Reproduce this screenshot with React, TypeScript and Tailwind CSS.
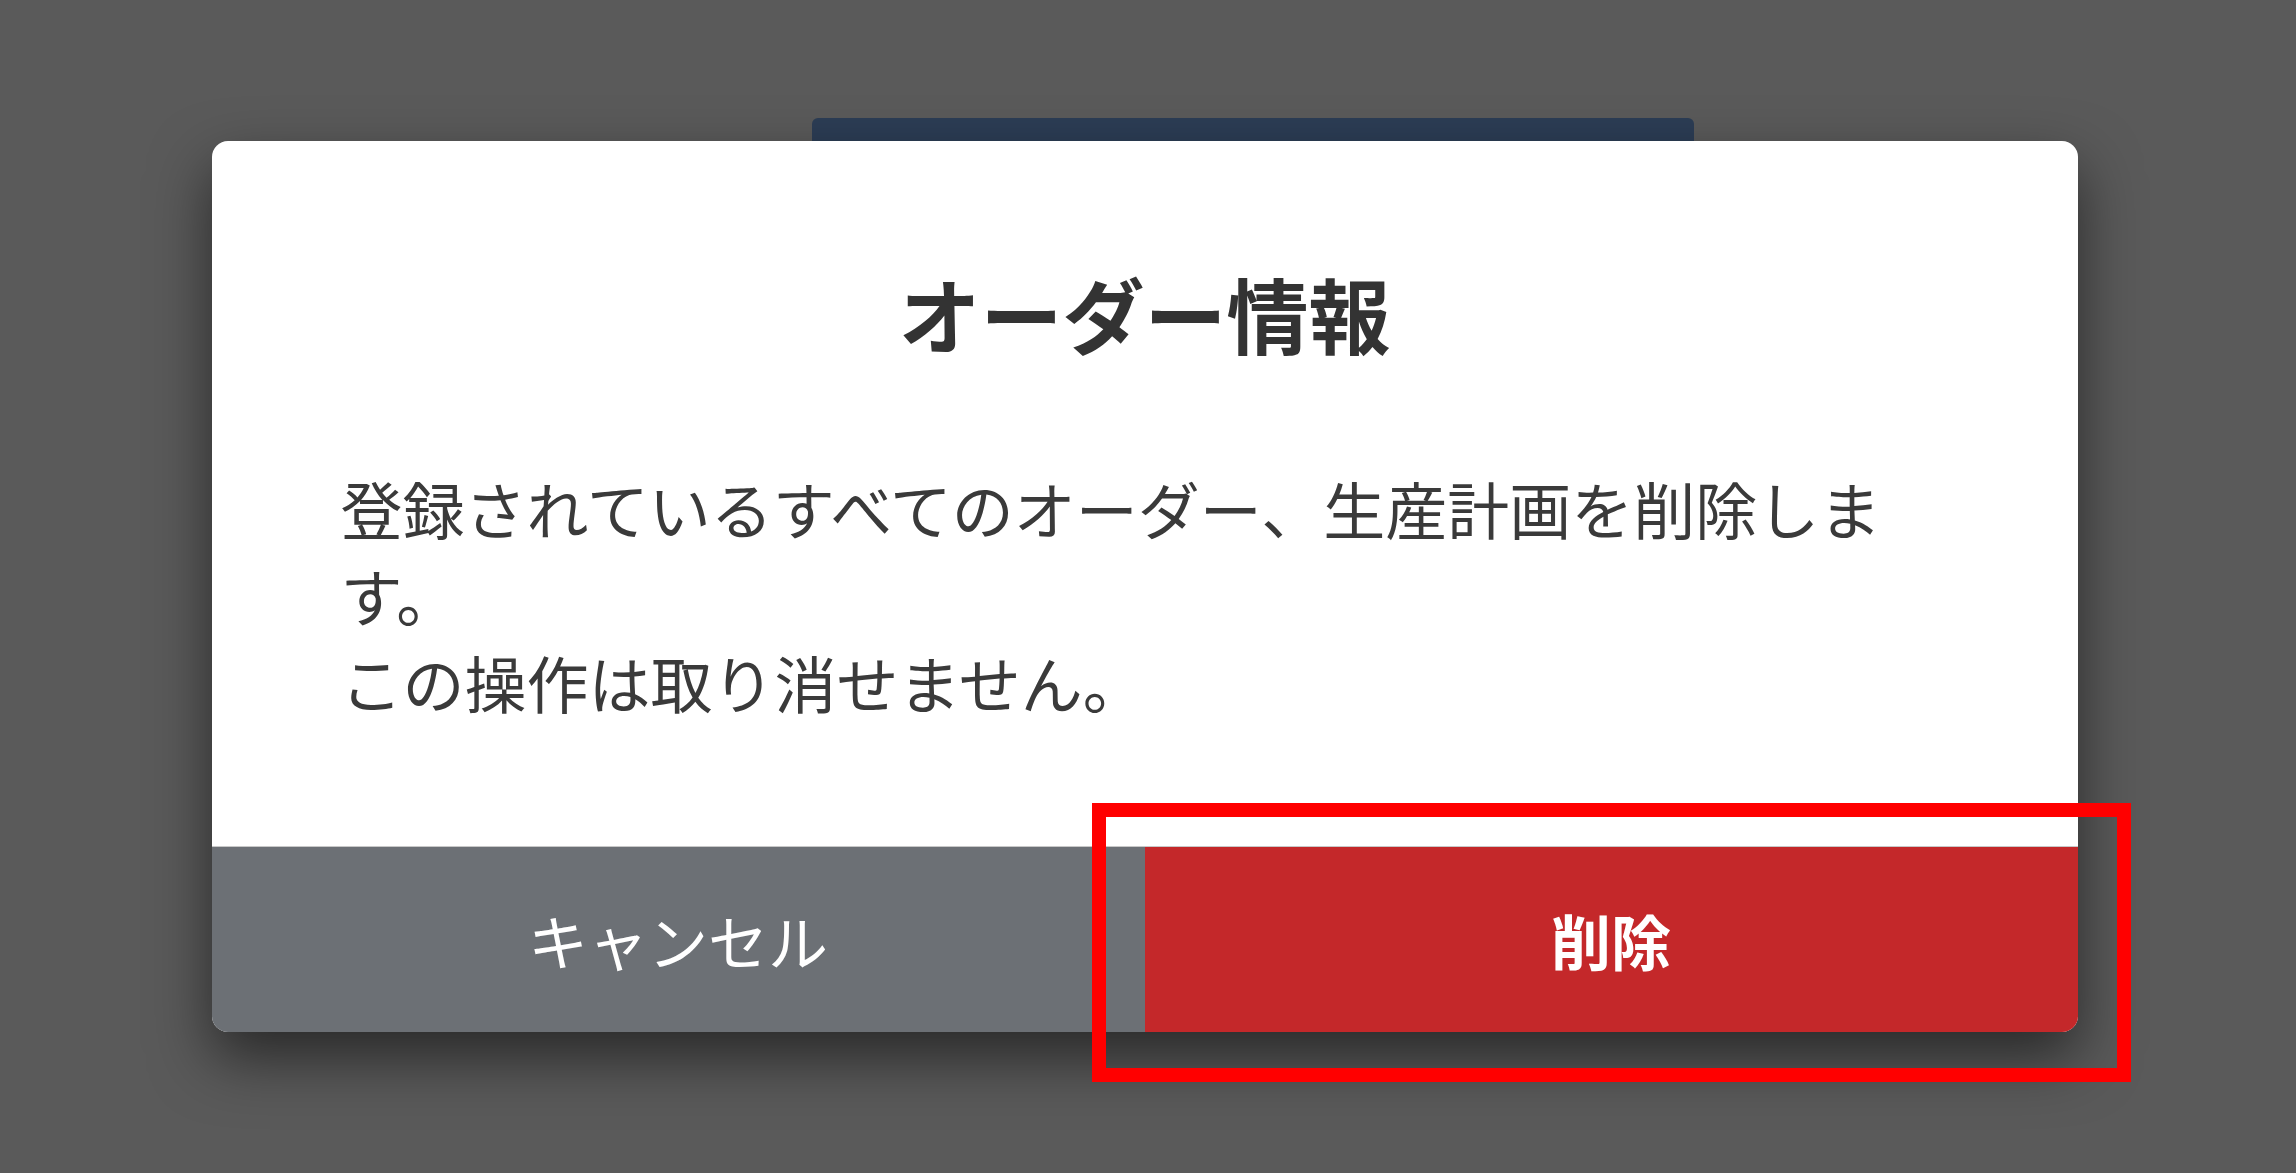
const jp = { fontFamily: '"Noto Sans CJK JP", "Noto Sans", sans-serif' };

function ConfirmDialog() {
  return (
    <div className="relative w-[1866px] overflow-hidden rounded-[16px] bg-white shadow-[0_26px_60px_rgba(0,0,0,0.55)]">
      <div className="px-[129px] pt-[123px] pb-[120px]">
        <h2 className="text-center text-[82px] font-bold leading-[98px] text-[#333333]">オーダー情報</h2>
        <p className="mt-[103px] text-[62px] leading-[87px] text-[#3a3a3a]">
          登録されているすべてのオーダー、生産計画を削除します。
          <br />
          この操作は取り消せません。
        </p>
      </div>
      <div className="grid h-[186px] grid-cols-2 border-t border-[#c8c8c8]">
        <button type="button" className="flex items-center justify-center bg-[#6c7075] text-[60px] text-white" style={jp}>
          キャンセル
        </button>
        <button type="button" className="flex items-center justify-center bg-[#c4282a] text-[60px] font-bold text-white" style={jp}>
          削除
        </button>
      </div>
    </div>
  );
}

export default function App() {
  return (
    <div className="relative h-[1173px] w-[2296px] overflow-hidden bg-[#5a5a5a]" style={jp}>
      {/* page header peeking out from behind the modal */}
      <div className="ml-[812px] mt-[118px] h-[60px] w-[882px] rounded-t-[6px] bg-[#2c3d55]" />

      {/* modal layer */}
      <div className="absolute inset-0 flex items-center justify-center pr-[7px]">
        <ConfirmDialog />
      </div>

      {/* highlight annotation */}
      <div className="absolute left-[1092px] top-[803px] h-[279px] w-[1039px] border-[14px] border-[#ff0000]" />
    </div>
  );
}
